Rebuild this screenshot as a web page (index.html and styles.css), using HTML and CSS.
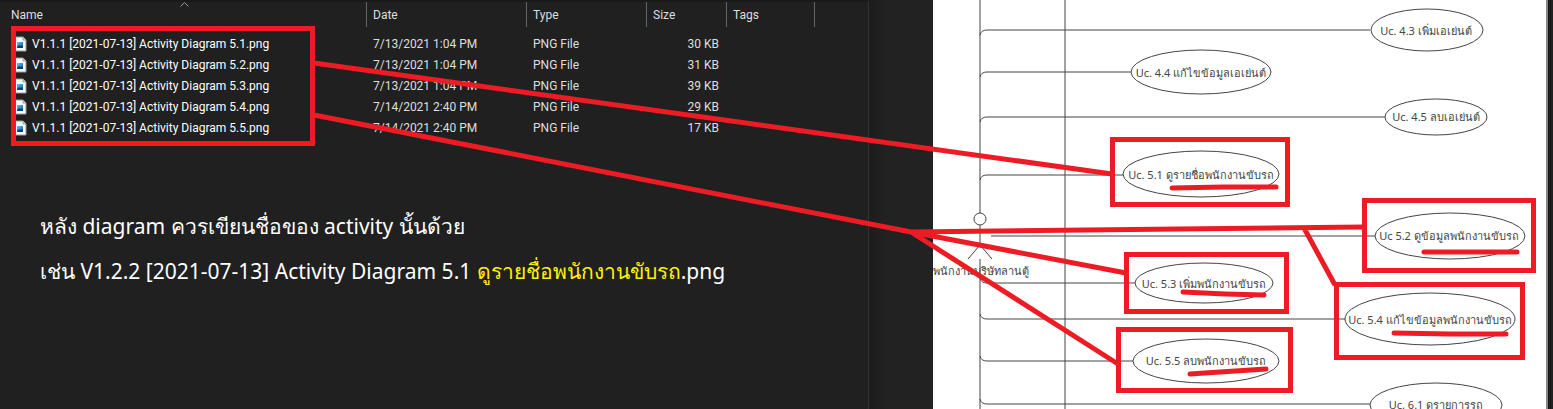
FILE: index.html
```
<!DOCTYPE html>
<html lang="th">
<head>
<meta charset="utf-8">
<title>Activity diagram file names</title>
<link rel="stylesheet" href="styles.css">
</head>
<body>
<svg class="defs" width="0" height="0" aria-hidden="true">
  <defs>
    <linearGradient id="sky" x1="0" y1="0" x2="1" y2="1">
      <stop offset="0" stop-color="#5cc4f5"/>
      <stop offset="1" stop-color="#0f5aa8"/>
    </linearGradient>
    <symbol id="png" viewBox="0 0 14 16">
      <path d="M1 1h9l3 3v11H1z" fill="#fafafa" stroke="#9a9a9a"/>
      <path d="M10 1v3h3" fill="#d8d8d8" stroke="#9a9a9a"/>
      <rect x="4" y="6" width="6" height="6" fill="url(#sky)"/>
      <path d="M4 11l2-2 2 1 2-1v3H4z" fill="#0b3f80"/>
    </symbol>
  </defs>
</svg>
<main class="screen">
  <section class="explorer">
    <table class="files">
      <colgroup><col class="c-name"><col class="c-date"><col class="c-type"><col class="c-size"><col class="c-tags"><col></colgroup>
      <thead>
        <tr>
          <th><span class="head">Name</span>
            <svg class="caret" width="9" height="5" viewBox="0 0 9 5" aria-hidden="true"><path d="M.5 4.500l4-4 4 4" fill="none" stroke="#9a9a9a"/></svg></th>
          <th><span class="head">Date</span></th>
          <th><span class="head">Type</span></th>
          <th><span class="head">Size</span></th>
          <th><span class="head">Tags</span></th>
          <td></td>
        </tr>
      </thead>
      <tbody>
        <tr><td><span class="file"><svg class="icon"><use href="#png"/></svg>V1.1.1 [2021-07-13] Activity Diagram 5.1.png</span></td><td>7/13/2021 1:04 PM</td><td>PNG File</td><td class="size">30 KB</td><td></td><td></td></tr>
        <tr><td><span class="file"><svg class="icon"><use href="#png"/></svg>V1.1.1 [2021-07-13] Activity Diagram 5.2.png</span></td><td>7/13/2021 1:04 PM</td><td>PNG File</td><td class="size">31 KB</td><td></td><td></td></tr>
        <tr><td><span class="file"><svg class="icon"><use href="#png"/></svg>V1.1.1 [2021-07-13] Activity Diagram 5.3.png</span></td><td>7/13/2021 1:04 PM</td><td>PNG File</td><td class="size">39 KB</td><td></td><td></td></tr>
        <tr><td><span class="file"><svg class="icon"><use href="#png"/></svg>V1.1.1 [2021-07-13] Activity Diagram 5.4.png</span></td><td>7/14/2021 2:40 PM</td><td>PNG File</td><td class="size">29 KB</td><td></td><td></td></tr>
        <tr><td><span class="file"><svg class="icon"><use href="#png"/></svg>V1.1.1 [2021-07-13] Activity Diagram 5.5.png</span></td><td>7/14/2021 2:40 PM</td><td>PNG File</td><td class="size">17 KB</td><td></td><td></td></tr>
      </tbody>
    </table>
    <div class="note">
      <p>หลัง diagram ควรเขียนชื่อของ activity นั้นด้วย</p>
      <p>เช่น V1.2.2 [2021-07-13] Activity Diagram 5.1 <mark>ดูรายชื่อพนักงานขับรถ</mark>.png</p>
    </div>
  </section>
  <div class="gutter"></div>
  <section class="board">
    <svg class="diagram" viewBox="933 0 613 409">
      <g class="wire">
        <path d="M980 0V213M980 225V245M980 259V409M1065 0V409"/>
        <path d="M980 35q1-5 7-5H1370M980 77q1-5 7-5H1132M980 122q1-5 7-5H1385M980 180q1-5 7-5H1124"/>
        <path d="M991 236H1375M980 278q1 5 7 5H1135M980 314q1 5 7 5H1346M980 356q1 5 7 5H1133M980 399q1 5 7 5H1370"/>
      </g>
      <g class="shape">
        <circle cx="980" cy="219" r="6"/>
        <path d="M968 259l12-14 12 14"/>
        <ellipse cx="1427" cy="30" rx="56" ry="21"/>
        <ellipse cx="1201" cy="72" rx="70" ry="22"/>
        <ellipse cx="1436" cy="117" rx="51" ry="18"/>
        <ellipse cx="1201" cy="174" rx="78" ry="23"/>
        <ellipse cx="1450" cy="236" rx="75" ry="23"/>
        <ellipse cx="1204" cy="283" rx="69" ry="20"/>
        <ellipse cx="1430" cy="319" rx="85" ry="26"/>
        <ellipse cx="1206" cy="361" rx="73" ry="22"/>
        <ellipse cx="1436" cy="405" rx="66" ry="22"/>
      </g>
      <g class="label">
        <text x="1426" y="35">Uc. 4.3 เพิ่มเอเย่นต์</text>
        <text x="1201" y="77">Uc. 4.4 แก้ไขข้อมูลเอเย่นต์</text>
        <text x="1436" y="121">Uc. 4.5 ลบเอเย่นต์</text>
        <text x="1201" y="179">Uc. 5.1 ดูรายชื่อพนักงานขับรถ</text>
        <text x="1449" y="240">Uc 5.2 ดูข้อมูลพนักงานขับรถ</text>
        <text x="1204" y="288">Uc. 5.3 เพิ่มพนักงานขับรถ</text>
        <text x="1430" y="324">Uc. 5.4 แก้ไขข้อมูลพนักงานขับรถ</text>
        <text x="1206" y="365">Uc. 5.5 ลบพนักงานขับรถ</text>
        <text x="1436" y="409">Uc. 6.1 ดูรายการรถ</text>
        <text x="981" y="275">พนักงานบริษัทลานตู้</text>
      </g>
    </svg>
  </section>
  <svg class="markup" viewBox="0 0 1553 409" aria-hidden="true">
    <path d="M13.500 28.500H312.500V143.500H13.500zM1112.500 139.500H1287.500V204.500H1112.500zM1364.500 200.500H1533.500V270.500H1364.500zM1126.500 254.500H1286.500V311.500H1126.500zM1336.500 284.500H1522.500V357.500H1336.500zM1118.500 329.500H1290.500V390.500H1118.500z"/>
    <path d="M314 63L1112 174M314 115L911 232L1364 227M911 232L1126 273M911 232L1118 364M1304 228L1335 285"/>
    <path class="under" d="M1172 188L1224 187H1276M1424 252H1517M1183 292L1225 294L1264 295M1394 333L1450 334H1506M1190 374L1220 372L1266 369"/>
  </svg>
</main>
</body>
</html>
```
FILE: styles.css
```
* { box-sizing: border-box; }
body {
  margin: 0;
  background: #202020;
  color: #dedede;
  font: 12px/20px Roboto, "Noto Sans", sans-serif;
}
.defs { position: absolute; }
.screen {
  position: relative;
  display: grid;
  grid-template-columns: 869fr 64fr 620fr;
  overflow: hidden;
}
.explorer {
  border-top: 2px solid #191919;
  border-right: 1px solid #333;
}
.files {
  width: 100%;
  table-layout: fixed;
  border-collapse: collapse;
}
.c-name { width: 367px; }
.c-date { width: 160px; }
.c-type { width: 120px; }
.c-size { width: 80px; }
.c-tags { width: 88px; }
.files th {
  position: relative;
  height: 31px;
  padding: 0;
  font-weight: 400;
  text-align: left;
  vertical-align: top;
}
.head {
  display: block;
  height: 25px;
  padding-left: 6px;
  border-right: 1px solid #636363;
  line-height: 26px;
}
.files th:first-child .head { padding-left: 11px; }
.caret {
  position: absolute;
  top: 0;
  left: 49%;
}
.files tbody td {
  height: 21px;
  padding: 0 8px 0 6px;
  white-space: nowrap;
}
.files tbody td:first-child { padding-left: 13px; color: #fff; }
.files .size { text-align: right; }
.file { display: flex; align-items: center; gap: 5px; }
.icon { width: 14px; height: 16px; }
.note {
  padding: 66px 40px 0;
  color: #fff;
  font-family: "Noto Sans", sans-serif;
  font-size: 21px;
  line-height: 45px;
  white-space: nowrap;
}
.note p { margin: 0; }
.note mark { background: none; color: #fff200; }
.gutter { background: linear-gradient(90deg, #1c1c1c, #222 30%); }
.board {
  padding-right: 7px;
  background: linear-gradient(90deg, #1a1a1a, #222) right / 5px 100% no-repeat, #888;
}
.diagram {
  display: block;
  width: 100%;
  background: #fff;
}
.wire, .shape { fill: none; stroke: #444; stroke-width: 1; }
.shape ellipse, .shape circle { fill: #fff; }
.label {
  fill: #444;
  font-family: "Noto Sans", sans-serif;
  font-size: 11px;
  text-anchor: middle;
}
.markup {
  position: absolute;
  inset: 0;
  width: 100%;
  fill: none;
  stroke: #ed1c24;
  stroke-width: 5;
  pointer-events: none;
}
.under { stroke-linecap: round; }
```
